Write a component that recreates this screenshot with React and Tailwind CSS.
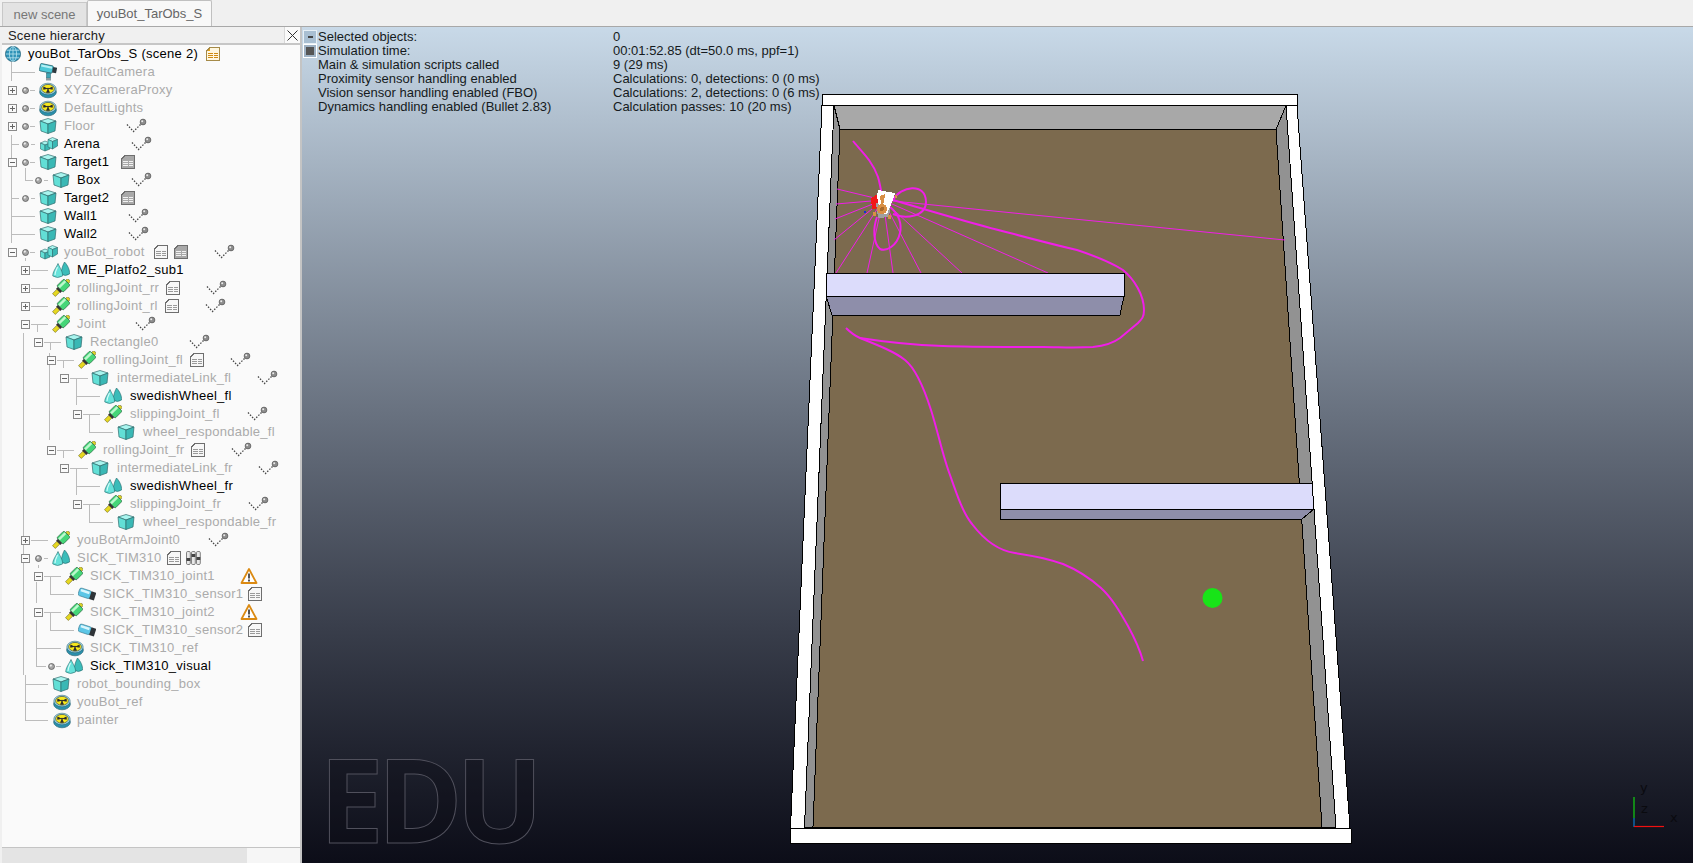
import React from "react";

const FONT = "font-['Liberation_Sans',Arial,sans-serif]";

// --- tree icons, all hand drawn in an 18px box ---
const Svg = ({ w = 18, children }) => (
  <svg width={w} height="18" viewBox={`0 0 ${w} 18`} className="shrink-0 block">
    {children}
  </svg>
);

const Cube = () => (
  <Svg>
    <polygon points="9,1.5 17,4 9,7 1,4" fill="#a8f4ee" stroke="#2f6a6c" strokeWidth=".7" />
    <polygon points="1,4 9,7 9,16.5 2,14" fill="#62dfd6" stroke="#2f6a6c" strokeWidth=".7" />
    <polygon points="9,7 17,4 16,14 9,16.5" fill="#3ab8b5" stroke="#2f6a6c" strokeWidth=".7" />
  </Svg>
);

const MultiCube = () => (
  <Svg>
    <polygon points="5,6 10,8 5,10 0.5,8" fill="#a8f4ee" stroke="#2f6a6c" strokeWidth=".6" />
    <polygon points="0.5,8 5,10 5,16 0.5,14" fill="#62dfd6" stroke="#2f6a6c" strokeWidth=".6" />
    <polygon points="5,10 10,8 10,14 5,16" fill="#3ab8b5" stroke="#2f6a6c" strokeWidth=".6" />
    <polygon points="12.5,2.5 17.5,4.5 12.5,6.5 8,4.5" fill="#a8f4ee" stroke="#2f6a6c" strokeWidth=".6" />
    <polygon points="8,4.5 12.5,6.5 12.5,14 8,12" fill="#62dfd6" stroke="#2f6a6c" strokeWidth=".6" />
    <polygon points="12.5,6.5 17.5,4.5 17.5,11 12.5,14" fill="#3ab8b5" stroke="#2f6a6c" strokeWidth=".6" />
  </Svg>
);

const Shape = () => (
  <Svg>
    <path d="M12.5 1 C10.5 5 9 9 9.5 13 Q13 16 17.5 13 C18 9 15.5 4 12.5 1Z" fill="#3bbcb9" stroke="#24666a" strokeWidth=".6" />
    <path d="M6 2.5 C4 7 0.5 11 0.8 15 Q5.5 18 10.5 15 C11 11 8 7 6 2.5Z" fill="#66e2da" stroke="#24666a" strokeWidth=".6" />
    <path d="M5.5 6 C4 9 3 11 3 14" stroke="#d0fcf8" strokeWidth="1.2" fill="none" />
  </Svg>
);

const Joint = () => (
  <Svg>
    <g transform="rotate(45 9 9)">
      <rect x="7" y="-2.5" width="4" height="3" fill="#d8cf2c" stroke="#444" strokeWidth=".5" />
      <rect x="4.5" y="0.5" width="9" height="10" rx="1.2" fill="#45d678" stroke="#24583a" strokeWidth=".6" />
      <rect x="6" y="1" width="2.4" height="9" fill="#bdf8cd" />
      <rect x="6" y="10.5" width="6" height="2.5" fill="#333" />
      <rect x="7" y="13" width="4" height="6" fill="#e6d820" stroke="#5a5410" strokeWidth=".5" />
    </g>
  </Svg>
);

const Dummy = () => (
  <Svg>
    <ellipse cx="9" cy="11" rx="8.4" ry="5.8" fill="#2a8fab" stroke="#1d5a6c" strokeWidth=".6" />
    <ellipse cx="9" cy="8" rx="8.2" ry="5.8" fill="#9ed4e2" stroke="#1d5a6c" strokeWidth=".5" />
    <ellipse cx="9" cy="7.8" rx="6.4" ry="4.4" fill="#f7e91c" stroke="#3c4a52" strokeWidth=".7" />
    <path d="M9 7.8 L4.6 5.6 Q3.8 7 4.4 8.8 Z M9 7.8 L13.4 5.6 Q14.2 7 13.6 8.8 Z M9 7.8 L7 11.4 Q9 12 11 11.4 Z" fill="#2a2a2a" />
    <circle cx="9" cy="7.8" r="1" fill="#2a2a2a" />
  </Svg>
);

const Camera = () => (
  <Svg>
    <g transform="rotate(12 9 7)">
      <rect x="0.5" y="2" width="13" height="7.5" rx="1" fill="#4cc9d8" stroke="#245c68" strokeWidth=".7" />
      <rect x="1.5" y="3" width="11" height="2" fill="#b5f0f5" />
      <rect x="13.5" y="3" width="4" height="5.5" fill="#2d3a40" />
    </g>
    <rect x="7.5" y="10" width="4" height="5" fill="#3fa5b5" stroke="#245c68" strokeWidth=".5" />
    <rect x="7" y="15" width="5" height="2.5" fill="#8b9ba0" />
  </Svg>
);

const Globe = () => (
  <Svg>
    <circle cx="9" cy="9" r="7.6" fill="#2f93b8" stroke="#17566e" strokeWidth=".7" />
    <ellipse cx="9" cy="9" rx="3.6" ry="7.4" fill="none" stroke="#b9e4ef" strokeWidth=".8" />
    <path d="M1.6 9H16.4M2.6 5.2H15.4M2.6 12.8H15.4M9 1.5V16.5" stroke="#b9e4ef" strokeWidth=".8" />
  </Svg>
);

const Script = ({ variant }) => {
  const fill = variant === "gray" ? "#a9a9a9" : variant === "orange" ? "#fff7df" : "#f7f7f7";
  const edge = variant === "orange" ? "#a58a48" : "#6e6e6e";
  const line = variant === "orange" ? "#d08a10" : variant === "gray" ? "#f2f2f2" : "#9a9a9a";
  return (
    <svg width="18" height="18" viewBox="0 0 18 18" className="shrink-0 block" shapeRendering="crispEdges">
      <path d="M6 2.5H15.5V15.5H2.5V6L6 2.5Z" fill={fill} stroke={edge} />
      <path d="M4 8.5H14M4 10.5H14M4 12.5H14" stroke={line} strokeDasharray="4.5 1" />
      {variant === "orange" && <path d="M3 6L6 3V6Z" fill="#e9a11a" />}
    </svg>
  );
};

const Dyn = () => (
  <Svg w={22}>
    <path d="M1 7.5 L7.5 14.5 L15.5 6.5" fill="none" stroke="#444" strokeWidth="1.3" strokeDasharray="1.5 1.5" />
    <circle cx="17" cy="5" r="2.9" fill="#8d8d8d" stroke="#444" strokeWidth=".6" />
    <circle cx="16.2" cy="4.2" r="1" fill="#eaeaea" />
  </Svg>
);

const Warning = () => (
  <Svg>
    <polygon points="9,2 16.5,16 1.5,16" fill="#fff" stroke="#db8a12" strokeWidth="1.8" strokeLinejoin="round" />
    <rect x="8" y="6.5" width="2" height="5" fill="#555" />
    <rect x="8" y="12.5" width="2" height="2" fill="#555" />
  </Svg>
);

const Sliders = () => (
  <Svg>
    {[1.5, 6.5, 11.5].map((x, i) => (
      <g key={x}>
        <rect x={x} y="2.5" width="3.8" height="13" rx="1.2" fill="#e8e8e8" stroke="#666" strokeWidth=".8" />
        <rect x={x} y={[9, 5, 8][i]} width="3.8" height="3" fill="#444" />
      </g>
    ))}
  </Svg>
);

const Sensor = () => (
  <Svg>
    <g transform="rotate(18 9 9)">
      <rect x="0.5" y="5" width="12.5" height="8" rx="2" fill="#5cc6e6" stroke="#3b7a8e" strokeWidth=".6" />
      <rect x="2" y="6" width="9" height="2.5" fill="#d9f6fc" />
      <rect x="12.5" y="5" width="5" height="8" fill="#2f3438" />
    </g>
  </Svg>
);

const ExpBox = ({ kind }) => (
  <svg width="9" height="9" viewBox="0 0 9 9" className="shrink-0 block">
    <rect x=".5" y=".5" width="8" height="8" fill="#fafafa" stroke="#8a8a8a" />
    <path d={kind === "+" ? "M2 4.5H7M4.5 2V7" : "M2 4.5H7"} stroke="#666" />
  </svg>
);

const Dot = () => (
  <svg width="7" height="7" viewBox="0 0 7 7" className="shrink-0 block">
    <circle cx="3.5" cy="3.5" r="3" fill="#a5a5a5" stroke="#4e4e4e" strokeWidth=".7" />
    <circle cx="2.8" cy="2.6" r="1.1" fill="#f0f0f0" />
  </svg>
);

const ICONS = { cube: Cube, multi: MultiCube, shape: Shape, joint: Joint, dummy: Dummy, camera: Camera, globe: Globe, sensor: Sensor };
const EXTRA_W = { dyn: 22 };
// where the label starts, for each icon column
const LABEL_X = { 13: 28, 48: 64, 49: 64, 61: 77, 62: 77, 74: 90, 75: 90, 87: 103, 100: 117, 113: 130, 126: 143 };

// row per line of the hierarchy. x values are centres in panel pixels
const ROWS = [
  { icon: "globe", ix: 13, label: "youBot_TarObs_S (scene 2)", dark: 1, extras: [["orange", 213]] },
  { icon: "camera", ix: 48, label: "DefaultCamera" },
  { exp: "+", ex: 12, dx: 25, icon: "dummy", ix: 48, label: "XYZCameraProxy" },
  { exp: "+", ex: 12, dx: 25, icon: "dummy", ix: 48, label: "DefaultLights" },
  { exp: "+", ex: 12, dx: 25, icon: "cube", ix: 48, label: "Floor", extras: [["dyn", 137]] },
  { dx: 25, icon: "multi", ix: 49, label: "Arena", dark: 1, extras: [["dyn", 142]] },
  { exp: "-", ex: 12, dx: 25, icon: "cube", ix: 48, label: "Target1", dark: 1, extras: [["gray", 128]] },
  { dx: 38, icon: "cube", ix: 61, label: "Box", dark: 1, extras: [["dyn", 142]] },
  { dx: 25, icon: "cube", ix: 48, label: "Target2", dark: 1, extras: [["gray", 128]] },
  { icon: "cube", ix: 48, label: "Wall1", dark: 1, extras: [["dyn", 139]] },
  { icon: "cube", ix: 48, label: "Wall2", dark: 1, extras: [["dyn", 139]] },
  { exp: "-", ex: 12, dx: 25, icon: "multi", ix: 49, label: "youBot_robot", extras: [["plain", 161], ["gray", 181], ["dyn", 225]] },
  { exp: "+", ex: 25, icon: "shape", ix: 61, label: "ME_Platfo2_sub1", dark: 1 },
  { exp: "+", ex: 25, icon: "joint", ix: 61, label: "rollingJoint_rr", extras: [["plain", 173], ["dyn", 217]] },
  { exp: "+", ex: 25, icon: "joint", ix: 61, label: "rollingJoint_rl", extras: [["plain", 172], ["dyn", 216]] },
  { exp: "-", ex: 25, icon: "joint", ix: 61, label: "Joint", extras: [["dyn", 146]] },
  { exp: "-", ex: 38, icon: "cube", ix: 74, label: "Rectangle0", extras: [["dyn", 200]] },
  { exp: "-", ex: 51, icon: "joint", ix: 87, label: "rollingJoint_fl", extras: [["plain", 197], ["dyn", 241]] },
  { exp: "-", ex: 64, icon: "cube", ix: 100, label: "intermediateLink_fl", extras: [["dyn", 268]] },
  { icon: "shape", ix: 113, label: "swedishWheel_fl", dark: 1 },
  { exp: "-", ex: 77, icon: "joint", ix: 113, label: "slippingJoint_fl", extras: [["dyn", 258]] },
  { icon: "cube", ix: 126, label: "wheel_respondable_fl" },
  { exp: "-", ex: 51, icon: "joint", ix: 87, label: "rollingJoint_fr", extras: [["plain", 198], ["dyn", 242]] },
  { exp: "-", ex: 64, icon: "cube", ix: 100, label: "intermediateLink_fr", extras: [["dyn", 269]] },
  { icon: "shape", ix: 113, label: "swedishWheel_fr", dark: 1 },
  { exp: "-", ex: 77, icon: "joint", ix: 113, label: "slippingJoint_fr", extras: [["dyn", 259]] },
  { icon: "cube", ix: 126, label: "wheel_respondable_fr" },
  { exp: "+", ex: 25, icon: "joint", ix: 61, label: "youBotArmJoint0", extras: [["dyn", 219]] },
  { exp: "-", ex: 25, dx: 38, icon: "shape", ix: 61, label: "SICK_TIM310", extras: [["plain", 174], ["sliders", 194]] },
  { exp: "-", ex: 38, icon: "joint", ix: 74, label: "SICK_TIM310_joint1", extras: [["warn", 249]] },
  { icon: "sensor", ix: 87, label: "SICK_TIM310_sensor1", extras: [["plain", 255]] },
  { exp: "-", ex: 38, icon: "joint", ix: 74, label: "SICK_TIM310_joint2", extras: [["warn", 249]] },
  { icon: "sensor", ix: 87, label: "SICK_TIM310_sensor2", extras: [["plain", 255]] },
  { icon: "dummy", ix: 75, label: "SICK_TIM310_ref" },
  { dx: 51, icon: "shape", ix: 74, label: "Sick_TIM310_visual", dark: 1 },
  { icon: "cube", ix: 61, label: "robot_bounding_box" },
  { icon: "dummy", ix: 62, label: "youBot_ref" },
  { icon: "dummy", ix: 62, label: "painter" },
];

const Extra = ({ type }) => {
  if (type === "dyn") return <Dyn />;
  if (type === "warn") return <Warning />;
  if (type === "sliders") return <Sliders />;
  return <Script variant={type} />;
};

function TreeRow({ row }) {
  const Icon = ICONS[row.icon];
  const lx = LABEL_X[row.ix];
  const extras = row.extras ?? [];
  let cursor = 0;
  const gap = (x, w) => {
    const left = Math.round(x - w / 2);
    const m = left - cursor;
    cursor = left + w;
    return m;
  };
  const expGap = row.exp ? gap(row.ex, 9) : 0;
  const dotGap = row.dx ? gap(row.dx, 7) : 0;
  const iconGap = gap(row.ix, 18);
  const labelGap = lx - cursor;
  cursor = lx;
  // the label cell runs up to the first badge, the badges then follow in flow
  const gaps = extras.map(([type, x]) => gap(x, EXTRA_W[type] ?? 18));
  const labelW = extras.length ? gaps[0] : undefined;

  return (
    <div className="flex items-center h-[18px] whitespace-nowrap">
      {row.exp && <span style={{ marginLeft: expGap }}><ExpBox kind={row.exp} /></span>}
      {row.dx && <span style={{ marginLeft: dotGap }}><Dot /></span>}
      <span style={{ marginLeft: iconGap }}><Icon /></span>
      <span
        className={`text-[13px] leading-[18px] tracking-[.27px] ${row.dark ? "text-black" : "text-[#ababab]"}`}
        style={{ marginLeft: labelGap, width: labelW }}
      >
        {row.label}
      </span>
      {extras.map(([type, x], i) => (
        <span key={x} style={{ marginLeft: i === 0 ? 0 : gaps[i] }}><Extra type={type} /></span>
      ))}
    </div>
  );
}

// connector lines of the tree, in page coordinates
const LINES =
  "M11 62V81M11 72H35 M30 90H35 M30 108H35 M30 126H35 M11 135V243M11 144H19M31 144H35 " +
  "M25 168V180H33M44 180H48 M11 198H19M31 198H35 M11 216H35 M11 234H35 M30 162H35 M30 252H35 M25 258V261 " +
  "M31 270H48 M31 288H48 M31 306H48 M31 324H48M37 324V332 M23 333V675 M44 342H61M50 342V350 " +
  "M57 360H74M63 360V368 M49 353V440 M70 378H88M76 378V405M76 396H100 M83 414H100M89 414V432H113 " +
  "M57 450H74M63 450V458 M70 468H88M76 468V495M76 486H100 M83 504H100M89 504V522H113 " +
  "M31 540H48 M44 558H48M38 565V568 M44 576H61M50 576V594H74M36 582V603 " +
  "M44 612H61M50 612V630H74M36 620V666H46M36 648H61M56 666H61 M25 675V720M25 684H48M25 702H48M25 720H48";

function HierarchyPanel() {
  return (
    <div className={`w-[302px] shrink-0 flex flex-col bg-[#fafafa] border-l-2 border-l-[#f0f0f0] border-r-2 border-r-[#c4c4c4] ${FONT}`}>
      <div className="h-[18px] flex items-center justify-between bg-[#f0f0f0] border-b-2 border-b-[#c6c6c6] text-[13px] tracking-[.2px] text-[#222]">
        <span className="pl-[6px] pt-[1px]">Scene hierarchy</span>
        <span className="h-full w-[16px] flex items-center justify-center bg-[#fafafa] border-l border-[#d8d8d8]">
          <svg width="11" height="11" viewBox="0 0 11 11"><path d="M.5.5 10.5 10.5M10.5.5.5 10.5" stroke="#333" /></svg>
        </span>
      </div>
      <div className="relative flex-1 -ml-[2px]">
        <svg className="absolute left-0 top-0 pointer-events-none" width="300" height="802" viewBox="0 45 300 802">
          <path d={LINES} fill="none" stroke="#bcbcbc" shapeRendering="crispEdges" />
        </svg>
        <div className="relative">
          {ROWS.map((r) => <TreeRow key={r.label} row={r} />)}
        </div>
      </div>
      <div className="h-[16px] flex bg-[#f6f6f6] border-t border-[#c4c4c4]">
        <div className="w-[245px] bg-[#e4e4e4]" />
      </div>
    </div>
  );
}

const INFO = [
  ["Selected objects:", "0"],
  ["Simulation time:", "00:01:52.85 (dt=50.0 ms, ppf=1)"],
  ["Main & simulation scripts called", "9 (29 ms)"],
  ["Proximity sensor handling enabled", "Calculations: 0, detections: 0 (0 ms)"],
  ["Vision sensor handling enabled (FBO)", "Calculations: 2, detections: 0 (6 ms)"],
  ["Dynamics handling enabled (Bullet 2.83)", "Calculation passes: 10 (20 ms)"],
];

function InfoOverlay() {
  return (
    <div className={`absolute left-0 top-0 flex pl-px pt-[2px] text-[13px] leading-[14px] text-[#151a20] ${FONT}`}>
      <div className="flex flex-col w-[15px] mt-[1px]">
        <div className="w-[14px] h-[14px] bg-[#a9bfd2] border border-[#e8f0f6] flex items-center justify-center">
          <span className="w-[5px] h-[2px] bg-[#444]" />
        </div>
        <div className="w-[14px] h-[14px] bg-[#9fb2c4] border border-white flex items-center justify-center">
          <span className="w-[8px] h-[8px] bg-[#555]" />
        </div>
      </div>
      <div className="grid grid-cols-[295px_auto] mt-[1px]">
        {INFO.flat().map((t) => <span key={t} className="whitespace-nowrap">{t}</span>)}
      </div>
    </div>
  );
}

const TRAIL_A =
  "M853 141C860 150 872 160 878 177C880 184 881 190 882 196 " +
  "M893 200C930 211 985 227 1010 233C1040 241 1060 246 1077 250C1095 256 1112 263 1123 270C1134 279 1144 295 1144 310C1144 317 1142 319 1138 323L1120 338C1112 344 1103 346 1093 347C1070 348 1060 347 1043 347C1010 347 970 347 943 346C915 345 885 342 860 338C853 335 850 332 846 328";
const TRAIL_B =
  "M860 338C880 346 895 352 905 360C915 368 923 385 931 410C938 432 943 457 950 475C957 495 963 513 972 524C985 541 1000 551 1015 553C1035 556 1050 559 1063 564C1080 571 1092 580 1101 588C1112 598 1120 612 1128 626C1134 637 1140 650 1143 661";
const LOOPS =
  "M893 200C900 186 926 182 926 202C926 216 906 220 893 214 M877 217C873 228 873 243 880 249C886 252 897 246 900 233C902 224 899 214 890 207";
const RAYS = [
  [837, 189], [836, 204], [835, 219], [834, 240], [836, 273], [867, 273], [893, 273], [921, 273], [962, 273], [1048, 273], [1285, 240],
];

function Scene() {
  return (
    <svg className="absolute inset-0" width="1391" height="836" viewBox="302 27 1391 836">
      <g shapeRendering="crispEdges" stroke="#000" strokeWidth="1">
        {/* side walls */}
        <polygon points="822,105.5 834,105.5 804.5,828 790.5,828" fill="#fff" />
        <polygon points="1286,105.5 1297,105.5 1350,828 1336,828" fill="#fff" />
        <polygon points="834,105.5 840,129.5 813,827 804.5,828" fill="#929292" />
        <polygon points="1286,105.5 1276,129.5 1322,827 1336,828" fill="#929292" />
        <polygon points="834,105.5 1286,105.5 1276,129.5 840,129.5" fill="#a8a8a8" />
        <polygon points="840,129.5 1276,129.5 1322,827 813,827" fill="#7c6a4e" />
        {/* front and back bars */}
        <polygon points="822,94.5 1297,94.5 1297,105.5 822,105.5" fill="#fff" />
        <polygon points="790,828.5 1351,828.5 1351.5,843 790,843" fill="#fff" />
      </g>

      <g fill="none" stroke="#f01ee8">
        {RAYS.map(([x, y]) => <line key={x} x1="883" y1="200" x2={x} y2={y} strokeWidth="1" />)}
        <path d={TRAIL_A} strokeWidth="2" />
        <path d={TRAIL_B} strokeWidth="2" />
        <path d={LOOPS} strokeWidth="2" />
      </g>

      <g shapeRendering="crispEdges" stroke="#000" strokeWidth="1">
        <polygon points="826,273 1124,273 1124,296 826,296" fill="#dcdcfb" />
        <polygon points="826,296 1124,296 1120,315 832,315" fill="#8e8eaa" />
        <polygon points="1000,509 1314,509 1302,519 1000,519" fill="#8e8eaa" />
        <polygon points="1000,483 1312,483 1314,509 1000,509" fill="#dcdcfb" />
      </g>

      {/* robot */}
      <g shapeRendering="crispEdges">
        <polygon points="871,198 878,194 880,208 872,209" fill="#f01818" />
        <polygon points="876,203 891,201 889,217 878,218" fill="#a0a0a0" />
        <polygon points="878,190 895,193 893,200 890,207 887,214 882,214 879,206 877,197" fill="#fff" />
        <polygon points="880,196 885,194 884,203 881,204" fill="#d88f45" />
        <circle cx="882" cy="209" r="5" fill="#d88f45" />
        <circle cx="882" cy="209" r="2" fill="#a96a2c" />
        <rect x="873" y="212" width="3" height="4" fill="#d88f45" />
        <rect x="888" y="215" width="3" height="4" fill="#d88f45" />
        <rect x="895" y="195" width="2" height="3" fill="#d88f45" />
        <rect x="864" y="211" width="2" height="2" fill="#1030d0" />
      </g>

      <circle cx="1212.5" cy="598" r="10" fill="#18e418" />

      <text x="319" y="843" fontFamily="'Open Sans',sans-serif" fontWeight="700" fontSize="116" letterSpacing="-7" fill="#0c0c14" fillOpacity=".35" stroke="#50505c" strokeWidth="1">EDU</text>

      <path d="M1634 797V827" stroke="#12d012" strokeWidth="1.2" />
      <path d="M1634 818V827" stroke="#1030d0" strokeWidth="1.2" />
      <path d="M1634 826.5H1664" stroke="#f01010" strokeWidth="1.2" />
      <g fontFamily="'DejaVu Sans',sans-serif" fontSize="13" fill="#0a0a0f">
        <text x="1640" y="792">y</text>
        <text x="1641" y="813">z</text>
        <text x="1670" y="822">x</text>
      </g>
    </svg>
  );
}

export default function App() {
  return (
    <div className={`w-[1693px] h-[863px] overflow-hidden flex flex-col bg-[#f0f0f0] ${FONT}`}>
      <div className="h-[27px] shrink-0 flex items-end pl-[2px] bg-[#f0f0f0] border-b border-[#a8a8a8] text-[13px]">
        <div className="w-[85px] h-[24px] flex items-center justify-center pt-[1px] bg-[#e3e3e3] border border-b-0 border-[#c8c8c8] text-[#777]">new scene</div>
        <div className="w-[125px] h-[26px] flex items-center justify-center pt-[1px] bg-[#f8f8f8] border border-b-0 border-[#c0c0c0] rounded-t-[2px] text-[#666]">youBot_TarObs_S</div>
      </div>
      <div className="flex-1 flex min-h-0">
        <HierarchyPanel />
        <div className="relative flex-1 bg-linear-to-b from-[#c8d9e8] to-[#0c0d18]">
          <Scene />
          <InfoOverlay />
        </div>
      </div>
    </div>
  );
}
